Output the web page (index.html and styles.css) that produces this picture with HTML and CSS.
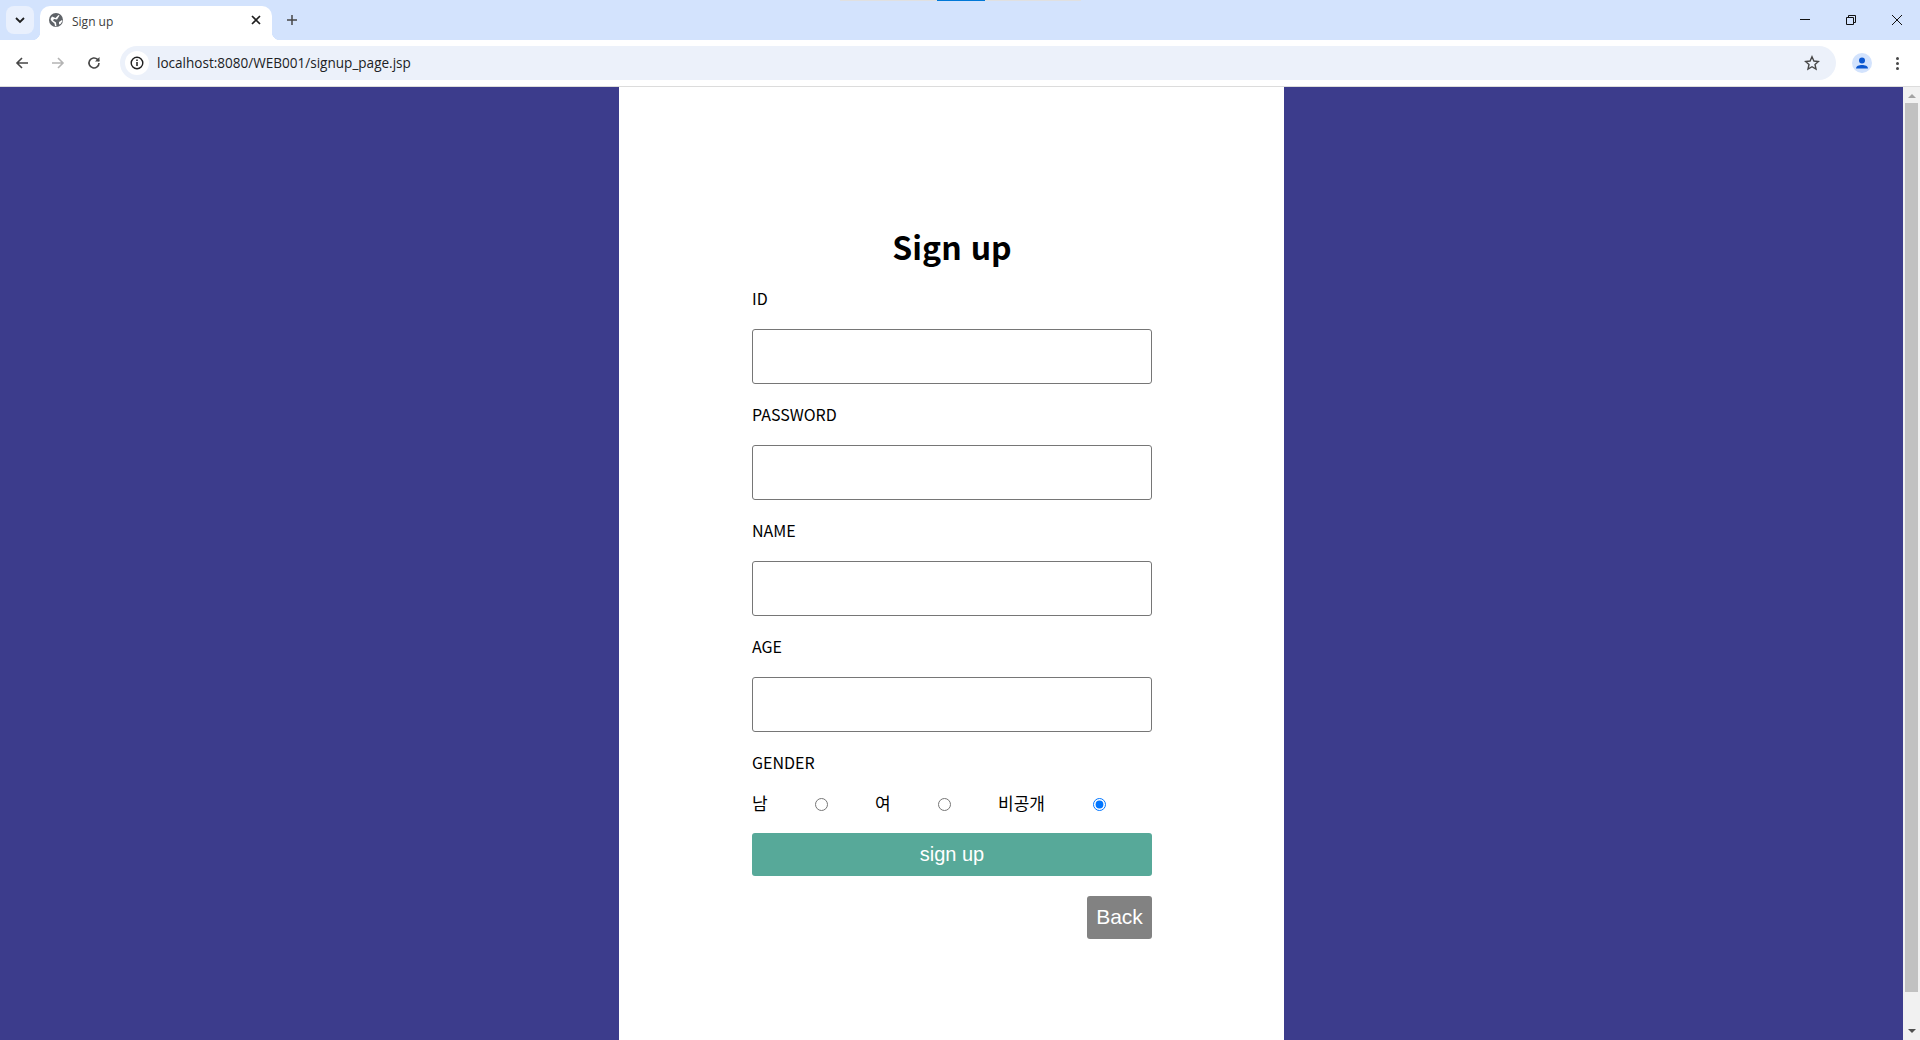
FILE: index.html
```html
<!DOCTYPE html>
<html lang="ko">
<head>
  <meta charset="UTF-8">
  <title>Sign up</title>
  <link rel="stylesheet" href="styles.css">
</head>
<body>
  <div class="tabbar">
    <div class="fullscreen-hint"><span></span></div>
    <div class="tab-search">
      <svg width="12" height="12" viewBox="0 0 12 12"><path d="M2 4l4 4 4-4" fill="none" stroke="#1f1f1f" stroke-width="1.8"/></svg>
    </div>
    <div class="tab">
      <svg class="favicon" width="14" height="14" viewBox="0 0 14 14">
        <circle cx="7" cy="7" r="7" fill="#5f6368"/>
        <path d="M3 3.500l3.500 1.500 3-3 1 .5-2.500 4-3-.5-1 1.500 3 2 .5 4-1.500-.5-.5-2.500-3-2.500-1-2zM10 9l3-2 .5 1-2 3-1.500.5z" fill="#fff"/>
      </svg>
      <span class="tab-title">Sign up</span>
      <svg class="tab-close" width="10" height="10" viewBox="0 0 10 10"><path d="M1 1l8 8M9 1l-8 8" stroke="#1f1f1f" stroke-width="1.700"/></svg>
    </div>
    <svg class="new-tab" width="12" height="12" viewBox="0 0 12 12"><path d="M6 1v10M1 6h10" stroke="#474747" stroke-width="1.500"/></svg>
    <div class="window-btns">
      <svg width="12" height="12" viewBox="0 0 12 12"><path d="M1 5.500h10" stroke="#111" stroke-width="1"/></svg>
      <svg width="12" height="12" viewBox="0 0 12 12"><path d="M1.500 3.500h7v7h-7zM3.500 3.500v-2h7v7h-2" fill="none" stroke="#111" stroke-width="1"/></svg>
      <svg width="12" height="12" viewBox="0 0 12 12"><path d="M1 1l10 10M11 1L1 11" stroke="#111" stroke-width="1"/></svg>
    </div>
  </div>

  <div class="toolbar">
    <svg class="nav-icon" width="16" height="16" viewBox="0 0 16 16"><path d="M14 8H3M8 3L3 8l5 5" fill="none" stroke="#474747" stroke-width="1.600"/></svg>
    <svg class="nav-icon" width="16" height="16" viewBox="0 0 16 16"><path d="M2 8h11M8 3l5 5-5 5" fill="none" stroke="#b4b4b4" stroke-width="1.600"/></svg>
    <svg class="nav-icon" width="16" height="16" viewBox="0 0 16 16"><path d="M13 8a5 5 0 1 1-1.500-3.600L13 6" fill="none" stroke="#474747" stroke-width="1.600"/><path d="M13.500 2v4.500H9z" fill="#474747"/></svg>
    <div class="omnibox">
      <div class="site-info">
        <svg width="16" height="16" viewBox="0 0 16 16"><circle cx="8" cy="8" r="5.800" fill="none" stroke="#1f1f1f" stroke-width="1.400"/><path d="M8 7v4M8 4.600v1.400" stroke="#1f1f1f" stroke-width="1.500"/></svg>
      </div>
      <span class="url">localhost:8080/WEB001/signup_page.jsp</span>
      <svg class="star" width="16" height="16" viewBox="0 0 16 16"><path d="M8 1.800l1.900 4.200 4.500.5-3.400 3 1 4.500L8 11.700 4 14l1-4.500-3.400-3 4.500-.5z" fill="none" stroke="#474747" stroke-width="1.400"/></svg>
    </div>
    <div class="profile">
      <svg width="20" height="20" viewBox="0 0 20 20"><circle cx="10" cy="10" r="10" fill="#d3e3fd"/><circle cx="10" cy="7.500" r="3" fill="#0b57d0"/><path d="M4 15.500c0-2.500 3-3.500 6-3.500s6 1 6 3.500z" fill="#0b57d0"/></svg>
    </div>
    <div class="menu-dots"><i></i><i></i><i></i></div>
  </div>

  <div class="viewport">
    <main class="page">
      <div class="card">
        <form class="signup-form" onsubmit="return false">
          <h1>Sign up</h1>
          <label class="field-label" for="uid">ID</label>
          <input class="text-input" type="text" id="uid">
          <label class="field-label" for="pw">PASSWORD</label>
          <input class="text-input" type="password" id="pw">
          <label class="field-label" for="uname">NAME</label>
          <input class="text-input" type="text" id="uname">
          <label class="field-label" for="age">AGE</label>
          <input class="text-input" type="text" id="age">
          <div class="field-label">GENDER</div>
          <div class="gender-row">
            <label for="g1">남</label>
            <input type="radio" name="gender" id="g1">
            <label for="g2">여</label>
            <input type="radio" name="gender" id="g2">
            <label for="g3">비공개</label>
            <input type="radio" name="gender" id="g3" checked>
          </div>
          <button class="btn-submit" type="submit">sign up</button>
          <div class="back-row"><button class="btn-back" type="button">Back</button></div>
        </form>
      </div>
    </main>
    <div class="scrollbar">
      <div class="arrow-up"></div>
      <div class="thumb"></div>
      <div class="arrow-down"></div>
    </div>
  </div>
</body>
</html>
```
FILE: styles.css
```css
* {
  box-sizing: border-box;
}

html, body {
  height: 100%;
}

body {
  margin: 0;
  height: 1040px;
  overflow: hidden;
  display: flex;
  flex-direction: column;
  font-family: "Noto Sans CJK KR", "Noto Sans", sans-serif;
  background: #fff;
}

/* browser chrome */
.tabbar {
  position: relative;
  height: 40px;
  flex: none;
  display: flex;
  align-items: flex-start;
  background: #d3e3fd;
}

.fullscreen-hint {
  position: absolute;
  top: 0;
  left: 840px;
  width: 241px;
  height: 1px;
  background: #e0e0e0;
  display: flex;
  justify-content: center;
}

.fullscreen-hint span {
  width: 48px;
  background: #0078d7;
}

.tab-search {
  width: 28px;
  height: 28px;
  margin: 6px 0 0 6px;
  border-radius: 8px;
  background: #e9f0fd;
  display: flex;
  align-items: center;
  justify-content: center;
}

.tab {
  position: relative;
  width: 232px;
  height: 34px;
  margin: 6px 0 0 6px;
  padding: 0 11px 0 9px;
  border-radius: 10px 10px 0 0;
  background: #fff;
  display: flex;
  align-items: center;
}

.tab::before,
.tab::after {
  content: "";
  position: absolute;
  bottom: 0;
  width: 8px;
  height: 8px;
}

.tab::before {
  left: -8px;
  background: radial-gradient(circle at 0 0, #d3e3fd 8px, #fff 8.500px);
}

.tab::after {
  right: -8px;
  background: radial-gradient(circle at 100% 0, #d3e3fd 8px, #fff 8.500px);
}

.favicon {
  flex: none;
  margin-top: -6px;
}

.tab-title {
  margin: -3px 0 0 9px;
  flex: 1;
  font-family: "Open Sans", sans-serif;
  font-size: 12px;
  color: #3c3c3c;
}

.tab-close {
  margin-top: -6px;
}

.new-tab {
  margin: 14px 0 0 14px;
}

.window-btns {
  margin-left: auto;
  display: flex;
  gap: 34px;
  padding: 14px 17px 0 0;
}

.toolbar {
  height: 47px;
  flex: none;
  display: flex;
  align-items: center;
  padding: 0 0 0 14px;
  background: #fff;
  border-bottom: 1px solid #dcdcdc;
  border-radius: 8px 8px 0 0;
}

.nav-icon {
  margin-right: 20px;
  flex: none;
}

.nav-icon:nth-child(3) {
  margin-right: 18px;
}

.omnibox {
  flex: 1;
  height: 34px;
  display: flex;
  align-items: center;
  padding: 0 16px 0 5px;
  border-radius: 17px;
  background: #ecf1fa;
}

.site-info {
  width: 24px;
  height: 24px;
  border-radius: 50%;
  background: #fff;
  display: flex;
  align-items: center;
  justify-content: center;
}

.url {
  margin-left: 8px;
  flex: 1;
  font-family: "Open Sans", sans-serif;
  font-size: 13.560px;
  color: #202124;
}

.profile {
  margin-left: 16px;
  width: 20px;
  height: 20px;
}

.menu-dots {
  margin: 0 21px 0 24px;
  width: 3px;
  display: flex;
  flex-direction: column;
  gap: 2px;
}

.menu-dots i {
  width: 3px;
  height: 3px;
  border-radius: 50%;
  background: #474747;
}

/* page */
.viewport {
  flex: 1;
  display: flex;
  min-height: 0;
}

.page {
  flex: 1;
  display: flex;
  justify-content: center;
  background: #3c3c8c;
}

.card {
  width: 665px;
  background: #fff;
  padding-top: 136px;
  display: flex;
  justify-content: center;
}

.signup-form {
  width: 400px;
  margin-left: 1px;
}

h1 {
  margin: 0 0 -2px;
  text-align: center;
  font-size: 32px;
  line-height: 47px;
  font-weight: 700;
  color: #000;
}

.field-label {
  display: block;
  height: 27px;
  margin-top: 18px;
  font-size: 16px;
  line-height: 24px;
  color: #000;
}

.text-input {
  display: block;
  width: 100%;
  height: 55px;
  margin: 16px 0 0;
  padding: 0 8px;
  background: #fff;
  border: 1px solid #767676;
  border-radius: 3px;
  outline: none;
}

.gender-row {
  display: flex;
  align-items: center;
  height: 24px;
  margin-top: 14px;
  font-size: 17px;
  color: #000;
}

.gender-row label {
  margin-top: -2px;
}

.gender-row input {
  width: 13px;
  height: 13px;
  margin: 2px 0 0;
  accent-color: #0075ff;
}

.gender-row label:nth-of-type(1) {
  width: 63px;
}

.gender-row label:nth-of-type(2) {
  width: 63px;
}

.gender-row label:nth-of-type(3) {
  width: 95px;
}

.gender-row input:nth-of-type(1) {
  margin-right: 47px;
}

.gender-row input:nth-of-type(2) {
  margin-right: 47px;
}

.btn-submit {
  display: block;
  width: 100%;
  height: 43px;
  margin-top: 18px;
  border: none;
  border-radius: 3px;
  background: #57a999;
  color: #fff;
  font-family: "Liberation Sans", sans-serif;
  font-size: 20px;
  cursor: pointer;
}

.back-row {
  display: flex;
  justify-content: flex-end;
  margin-top: 20px;
}

.btn-back {
  width: 65px;
  height: 43px;
  padding: 0 0 2px;
  border: none;
  border-radius: 3px;
  background: #828282;
  color: #fff;
  font-family: "Liberation Sans", sans-serif;
  font-size: 21px;
  cursor: pointer;
}

/* scrollbar */
.scrollbar {
  width: 17px;
  flex: none;
  display: flex;
  flex-direction: column;
  align-items: center;
  background: #f1f1f1;
}

.arrow-up {
  margin-top: 7px;
  border-left: 4px solid transparent;
  border-right: 4px solid transparent;
  border-bottom: 4px solid #a3a3a3;
}

.thumb {
  width: 13px;
  height: 889px;
  margin-top: 5px;
  background: #c1c1c1;
}

.arrow-down {
  margin-top: 37px;
  border-left: 4px solid transparent;
  border-right: 4px solid transparent;
  border-top: 4px solid #505050;
}
```
